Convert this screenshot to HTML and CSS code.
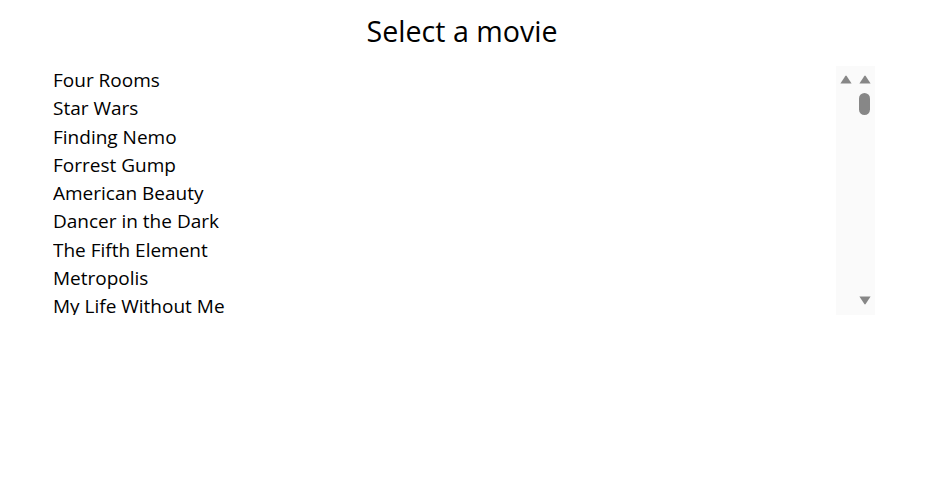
FILE: index.html
```html
<!DOCTYPE html>
<html>
<head>
<meta charset="utf-8">
<link rel="stylesheet" href="styles.css">
</head>
<body>
<div class="wrap">
  <h1 class="title">Select a movie</h1>
  <div class="listbox">
    <ul class="movies">
      <li>Four Rooms</li>
      <li>Star Wars</li>
      <li>Finding Nemo</li>
      <li>Forrest Gump</li>
      <li>American Beauty</li>
      <li>Dancer in the Dark</li>
      <li>The Fifth Element</li>
      <li>Metropolis</li>
      <li>My Life Without Me</li>
    </ul>
    <div class="bars">
      <div class="bar outer">
        <svg class="arrow" width="12" height="9" viewBox="0 0 12 9"><path d="M6 0.6 Q6.4 0.6 6.8 1.2 L11.6 8.4 L0.4 8.4 L5.2 1.2 Q5.6 0.6 6 0.6 Z" fill="#878787"/></svg>
      </div>
      <div class="bar inner">
        <svg class="arrow" width="12" height="9" viewBox="0 0 12 9"><path d="M6 0.6 Q6.4 0.6 6.8 1.2 L11.6 8.4 L0.4 8.4 L5.2 1.2 Q5.6 0.6 6 0.6 Z" fill="#878787"/></svg>
        <div class="thumb"></div>
        <div class="spacer"></div>
        <svg class="arrow" width="12" height="9" viewBox="0 0 12 9"><path d="M6 8.4 Q6.4 8.4 6.8 7.8 L11.6 0.6 L0.4 0.6 L5.2 7.8 Q5.6 8.4 6 8.4 Z" fill="#878787"/></svg>
      </div>
    </div>
  </div>
</div>
</body>
</html>
```
FILE: styles.css
```css
html, body {
  margin: 0;
  padding: 0;
  background: #fff;
}
body {
  font-family: "Open Sans", "Noto Sans", sans-serif;
  color: #000;
}
.wrap {
  margin-left: 53px;
  width: 822px;
}
.title {
  margin: 0;
  padding-top: 11px;
  padding-right: 4px;
  height: 66px;
  box-sizing: border-box;
  text-align: center;
  font-weight: 400;
  font-size: 28.6px;
  line-height: 40px;
}
.listbox {
  display: flex;
  height: 249px;
  overflow: hidden;
}
.movies {
  flex: 1;
  list-style: none;
  margin: 0;
  padding: 0;
  font-size: 19px;
  line-height: 28.25px;
}
.movies li {
  white-space: nowrap;
}
.bars {
  display: flex;
  width: 39px;
  background: #fafafa;
}
.bar {
  width: 19px;
  display: flex;
  flex-direction: column;
  align-items: center;
  padding: 9px 0 10px;
  box-sizing: border-box;
}
.arrow {
  display: block;
  flex: none;
}
.thumb {
  margin-top: 9px;
  width: 11px;
  height: 22px;
  border-radius: 5.5px;
  background: #878787;
}
.spacer {
  flex: 1;
}
```
